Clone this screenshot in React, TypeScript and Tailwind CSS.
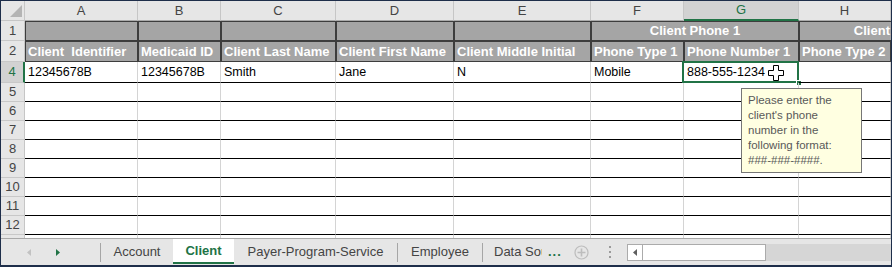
import React from "react";

type Col = { id: string; w: string };

const cols: Col[] = [
  { id: "A", w: "w-[113px]" },
  { id: "B", w: "w-[83px]" },
  { id: "C", w: "w-[115px]" },
  { id: "D", w: "w-[118px]" },
  { id: "E", w: "w-[137px]" },
  { id: "F", w: "w-[93px]" },
  { id: "G", w: "w-[115px]" },
  { id: "H", w: "w-[92px]" },
  { id: "I", w: "w-[100px]" },
];

const subHeads = [
  "Client  Identifier",
  "Medicaid ID",
  "Client Last Name",
  "Client First Name",
  "Client Middle Initial",
  "Phone Type 1",
  "Phone Number 1",
  "Phone Type 2",
  "",
];

const row4 = ["12345678B", "12345678B", "Smith", "Jane", "N", "Mobile", "888-555-1234", "", ""];

function RowHead({ n, h, active }: { n?: string; h: string; active?: boolean }) {
  return (
    <div
      className={`${h} w-[24px] shrink-0 flex items-center justify-center border-b border-b-[#c8c8c8] ${
        active
          ? "bg-[#d2d2d2] text-[#217346] border-r-2 border-r-[#217346]"
          : "bg-[#e6e6e6] text-[#444] border-r border-r-[#c6c6c6]"
      }`}
    >
      {n}
    </div>
  );
}

function GrayCell({ w, children, center }: { w: string; children?: React.ReactNode; center?: boolean }) {
  return (
    <div
      className={`${w} shrink-0 h-full flex items-center overflow-hidden whitespace-pre border border-[#3d3d3d] bg-[#a5a5a5] font-bold text-white ${
        center ? "justify-center" : "pl-[2px]"
      }`}
    >
      {children}
    </div>
  );
}

function Cursor() {
  return (
    <svg width="17" height="17" viewBox="0 0 17 17" className="absolute left-[84px] top-[3px]">
      <path
        d="M5.5 0.5 H10.5 V5.5 H15.5 V10.5 H10.5 V15.5 H5.5 V10.5 H0.5 V5.5 H5.5 Z"
        fill="#fff"
        stroke="#000"
        strokeWidth="1"
      />
    </svg>
  );
}

function DataRow({ n, cells, first }: { n: string; cells?: string[]; first?: boolean }) {
  const h = first ? "h-[21px]" : "h-[19px]";
  return (
    <div className={`flex ${h} shrink-0`}>
      <RowHead n={n} h={h} active={first} />
      {cols.map((c, i) => (
        <div
          key={c.id}
          className={`${c.w} shrink-0 relative flex items-center pl-[3px] whitespace-nowrap text-[12.5px] border-r border-r-[#d4d4d4] border-b border-b-black`}
        >
          {cells ? cells[i] : ""}
          {first && c.id === "G" && (
            <>
              <div className="absolute left-[-2px] top-[-1px] right-[-1px] bottom-[-1px] border-2 border-[#217346]" />
              <div className="absolute right-[-4px] bottom-[-4px] w-[6px] h-[6px] bg-[#217346] border border-white" />
              <Cursor />
            </>
          )}
        </div>
      ))}
    </div>
  );
}

function Sep() {
  return <div className="w-px h-[19px] self-center bg-[#a6a6a6] shrink-0" />;
}

function TabBar() {
  return (
    <div className="flex h-[27px] shrink-0 items-stretch border-t border-[#a9a9a9] bg-[#e6e6e6] text-[#444]">
      <div className="w-[99px] shrink-0 flex items-center pl-[26px] gap-[25px]">
        <svg width="4" height="7" viewBox="0 0 4 7">
          <path d="M4 0 V7 L0 3.5 Z" fill="#c2c2c2" />
        </svg>
        <svg width="4" height="7" viewBox="0 0 4 7">
          <path d="M0 0 V7 L4 3.5 Z" fill="#217346" />
        </svg>
      </div>
      <Sep />
      <div className="w-[72px] shrink-0 flex items-center justify-center">Account</div>
      <div className="w-[61px] h-[25px] shrink-0 flex items-center justify-center bg-white border-b-2 border-[#217346] font-bold text-[#217346]">
        Client
      </div>
      <div className="w-[163px] shrink-0 flex items-center justify-center">Payer-Program-Service</div>
      <Sep />
      <div className="w-[84px] shrink-0 flex items-center justify-center">Employee</div>
      <Sep />
      <div className="w-[59px] shrink-0 flex items-center pl-[11px]">
        <div className="w-[48px] overflow-hidden whitespace-nowrap">Data Sou</div>
      </div>
      <div className="ml-[6px] flex items-center font-bold text-[#217346] tracking-[1px]">...</div>
      <div className="flex items-center ml-[12px]">
        <svg width="15" height="15" viewBox="0 0 15 15">
          <circle cx="7.5" cy="7.5" r="6.5" fill="none" stroke="#bdbdbd" strokeWidth="1.2" />
          <path d="M7.5 3.5 V11.5 M3.5 7.5 H11.5" stroke="#bdbdbd" strokeWidth="1.6" />
        </svg>
      </div>
      <div className="flex flex-col justify-center gap-[3px] ml-[20px]">
        <div className="w-[2px] h-[2px] bg-[#9a9a9a]" />
        <div className="w-[2px] h-[2px] bg-[#9a9a9a]" />
        <div className="w-[2px] h-[2px] bg-[#9a9a9a]" />
      </div>
      <div className="ml-[16px] self-center flex w-[139px] h-[17px] shrink-0 border border-[#ababab] bg-white">
        <div className="w-[15px] h-full flex items-center justify-center border-r border-[#ababab]">
          <svg width="4" height="7" viewBox="0 0 4 7">
            <path d="M4 0 V7 L0 3.5 Z" fill="#5f5f5f" />
          </svg>
        </div>
      </div>
      <div className="flex-1 self-center h-[17px] bg-[#d6d6d6]" />
    </div>
  );
}

export default function App() {
  return (
    <div className="relative w-[892px] h-[267px] flex flex-col overflow-hidden border border-b-2 border-[#1e2e4a] bg-white font-['Liberation_Sans',Arial,sans-serif] text-[13px] text-black">
      <div className="flex flex-col h-[237px] shrink-0 overflow-hidden">
        {/* column letters */}
        <div className="flex h-[20px] shrink-0">
          <div className="w-[24px] shrink-0 flex items-end justify-end pr-[2px] pb-[3px] bg-[#e6e6e6] border-r border-b border-[#c6c6c6]">
            <svg width="12" height="12" viewBox="0 0 12 12">
              <path d="M12 0 V12 H0 Z" fill="#b4b4b4" />
            </svg>
          </div>
          {cols.map((c) =>
            c.id === "G" ? (
              <div
                key={c.id}
                className={`${c.w} shrink-0 flex items-center justify-center bg-[#d2d2d2] text-[#217346] border-r border-r-[#c6c6c6] border-b-2 border-b-[#217346]`}
              >
                {c.id}
              </div>
            ) : (
              <div
                key={c.id}
                className={`${c.w} shrink-0 flex items-center justify-center bg-[#e6e6e6] text-[#444] border-r border-r-[#c6c6c6] border-b border-b-[#ababab]`}
              >
                {c.id}
              </div>
            )
          )}
        </div>

        {/* row 1 */}
        <div className="flex h-[20px] shrink-0">
          <RowHead n="1" h="h-[20px]" />
          {cols.slice(0, 5).map((c) => (
            <GrayCell key={c.id} w={c.w} />
          ))}
          <GrayCell w="w-[208px]" center>
            Client Phone 1
          </GrayCell>
          <GrayCell w="w-[200px]" center>
            Client Phone 2
          </GrayCell>
        </div>

        {/* row 2 */}
        <div className="flex h-[21px] shrink-0">
          <RowHead n="2" h="h-[21px]" />
          {cols.map((c, i) => (
            <GrayCell key={c.id} w={c.w}>
              {subHeads[i]}
            </GrayCell>
          ))}
        </div>

        <DataRow n="4" cells={row4} first />
        {["5", "6", "7", "8", "9", "10", "11", "12"].map((n) => (
          <DataRow key={n} n={n} />
        ))}
        <div className="flex flex-1">
          <div className="w-[24px] shrink-0 bg-[#e6e6e6] border-r border-[#c6c6c6]" />
          {cols.map((c) => (
            <div key={c.id} className={`${c.w} shrink-0 border-r border-[#d4d4d4]`} />
          ))}
        </div>
      </div>

      <TabBar />

      <div className="absolute left-[740px] top-[87px] w-[121px] h-[85px] border border-[#767676] bg-[#ffffe1] pl-[6px] pt-[4px] text-[11.5px] leading-[15px] text-[#595959]">
        <div>Please enter the</div>
        <div>client's phone</div>
        <div>number in the</div>
        <div>following format:</div>
        <div>###-###-####.</div>
      </div>
    </div>
  );
}
